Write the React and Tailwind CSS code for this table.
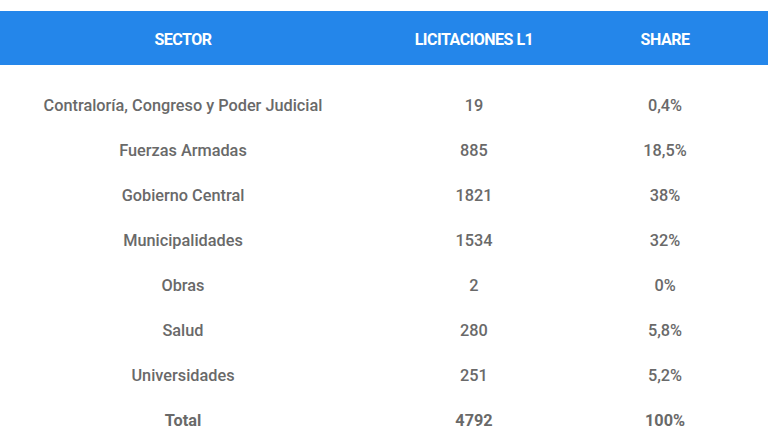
const rows = [
  ["Contraloría, Congreso y Poder Judicial", "19", "0,4%"],
  ["Fuerzas Armadas", "885", "18,5%"],
  ["Gobierno Central", "1821", "38%"],
  ["Municipalidades", "1534", "32%"],
  ["Obras", "2", "0%"],
  ["Salud", "280", "5,8%"],
  ["Universidades", "251", "5,2%"],
];

export default function App() {
  return (
    <div className="w-[768px] h-[441px] overflow-hidden bg-white pt-[11px] font-['Roboto',sans-serif]">
      <div className="flex h-[54px] items-center bg-[#2486ea] pt-[3px] text-[16px] font-bold text-white tracking-[-0.5px]">
        <div className="w-[366px] text-center">SECTOR</div>
        <div className="w-[216px] text-center">LICITACIONES L1</div>
        <div className="w-[166px] text-center">SHARE</div>
      </div>
      <div className="pt-[19px] text-[16.3px] font-medium text-[#696969]">
        {rows.map(([s, n, p]) => (
          <div key={s} className="flex h-[45px] items-center">
            <div className="w-[366px] text-center">{s}</div>
            <div className="w-[216px] text-center">{n}</div>
            <div className="w-[166px] text-center">{p}</div>
          </div>
        ))}
        <div className="flex h-[45px] items-center font-bold">
          <div className="w-[366px] text-center">Total</div>
          <div className="w-[216px] text-center">4792</div>
          <div className="w-[166px] text-center">100%</div>
        </div>
      </div>
    </div>
  );
}
